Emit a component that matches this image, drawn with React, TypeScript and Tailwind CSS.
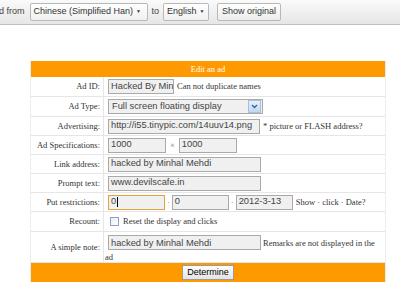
import React from "react";

const serif = { fontFamily: '"Liberation Serif", "Times New Roman", serif' };
const sans = { fontFamily: '"Liberation Sans", Arial, sans-serif' };

function Field({ w, value, focus }: { w: string; value: string; focus?: boolean }) {
  return (
    <span
      className={`inline-flex items-center shrink-0 h-[15px] ${w} px-[2px] align-middle overflow-hidden whitespace-nowrap text-[9.3px] text-[#444] bg-[#f0f0f0] border ${
        focus ? "border-[#e5a33c]" : "border-[#a9a9a9]"
      }`}
      style={sans}
    >
      {value}
      {focus && <span className="inline-block w-px h-[10px] bg-black ml-px" />}
    </span>
  );
}

function Row({ label, h, children }: { label: string; h: string; children: React.ReactNode }) {
  return (
    <div className={`flex ${h} border-b border-[#e6e6e6]`}>
      <div className="w-[73px] shrink-0 flex items-center justify-end pr-[3px] border-r border-[#e6e6e6] text-[8.5px] text-[#333] whitespace-nowrap" style={serif}>
        {label}
      </div>
      <div className="flex-1 flex items-center pl-[4px] text-[8.5px] text-[#333] whitespace-nowrap" style={serif}>
        {children}
      </div>
    </div>
  );
}

export default function App() {
  return (
    <div className="w-[400px] h-[294px] bg-white overflow-hidden relative">
      {/* top translate bar */}
      <div className="h-[25px] flex items-center whitespace-nowrap border-b border-[#bdbdbd] bg-gradient-to-b from-[#fafafa] to-[#e6e6e6] text-[9px] text-[#444]" style={sans}>
        <span className="ml-[-1px]">d from</span>
        <span className="ml-[5px] shrink-0 h-[18px] w-[118px] flex items-center px-[3px] border border-[#b8b8b8] rounded-[2px] bg-gradient-to-b from-white to-[#f0f0f0] text-[#333]">
          Chinese (Simplified Han)
          <span className="ml-[3px] text-[5px]">▼</span>
        </span>
        <span className="ml-[4px]">to</span>
        <span className="ml-[4px] shrink-0 h-[18px] w-[46px] flex items-center px-[3px] border border-[#b8b8b8] rounded-[2px] bg-gradient-to-b from-white to-[#f0f0f0] text-[#333]">
          English
          <span className="ml-[3px] text-[5px]">▼</span>
        </span>
        <span className="ml-[8px] shrink-0 h-[18px] w-[64px] flex items-center justify-center border border-[#b8b8b8] rounded-[2px] bg-gradient-to-b from-white to-[#ececec] text-[#333]">
          Show original
        </span>
      </div>

      {/* form table */}
      <div className="ml-[30px] mt-[36px] w-[356px] border-x border-[#ececec]">
        <div className="h-[16px] bg-[#ff9900] flex items-center justify-center text-white text-[8.5px]" style={serif}>
          Edit an ad
        </div>
        <Row label="Ad ID:" h="h-[20px]">
          <Field w="w-[66px]" value="Hacked By Min" />
          <span className="ml-[3px]">Can not duplicate names</span>
        </Row>
        <Row label="Ad Type:" h="h-[20px]">
          <span className="inline-flex items-center h-[15px] w-[155px] border border-[#a9a9a9] bg-[#f0f0f0] text-[9.3px] text-[#444] pl-[3px]" style={sans}>
            <span className="flex-1">Full screen floating display</span>
            <span className="w-[13px] h-[13px] mr-px flex items-center justify-center bg-gradient-to-b from-[#e6f0fb] to-[#c2d8f2] border border-[#a7c0de]">
              <svg width="7" height="5" viewBox="0 0 7 5">
                <path d="M1 1 L3.5 3.5 L6 1" stroke="#3a5f91" strokeWidth="1.3" fill="none" />
              </svg>
            </span>
          </span>
        </Row>
        <Row label="Advertising:" h="h-[19px]">
          <Field w="w-[152px]" value="http://i55.tinypic.com/14uuv14.png" />
          <span className="ml-[3px]">* picture or FLASH address?</span>
        </Row>
        <Row label="Ad Specifications:" h="h-[19px]">
          <Field w="w-[58px]" value="1000" />
          <span className="mx-[4px] text-[#777]">×</span>
          <Field w="w-[58px]" value="1000" />
        </Row>
        <Row label="Link address:" h="h-[19px]">
          <Field w="w-[153px]" value="hacked by Minhal Mehdi" />
        </Row>
        <Row label="Prompt text:" h="h-[19px]">
          <Field w="w-[153px]" value="www.devilscafe.in" />
        </Row>
        <Row label="Put restrictions:" h="h-[19px]">
          <Field w="w-[57px]" value="0" focus />
          <span className="mx-[2px] text-[#777]">·</span>
          <Field w="w-[57px]" value="0" />
          <span className="mx-[2px] text-[#777]">·</span>
          <Field w="w-[57px]" value="2012-3-13" />
          <span className="ml-[3px]">Show · click · Date?</span>
        </Row>
        <Row label="Recount:" h="h-[20px]">
          <span className="ml-[2px] w-[9px] h-[9px] border border-[#8ea2bb] bg-gradient-to-br from-[#e8edf3] to-white" />
          <span className="ml-[4px]">Reset the display and clicks</span>
        </Row>
        <div className="flex h-[31px] border-b border-[#e6e6e6]">
          <div className="w-[73px] shrink-0 flex items-center justify-end pr-[3px] border-r border-[#e6e6e6] text-[8.5px] text-[#333] whitespace-nowrap" style={serif}>
            A simple note:
          </div>
          <div className="flex-1 pl-[1px] pt-[3px] text-[8.5px] text-[#333] leading-[10px]" style={serif}>
            <div className="flex items-center">
              <span className="ml-[3px] flex"><Field w="w-[153px]" value="hacked by Minhal Mehdi" /></span>
              <span className="ml-[2px] whitespace-nowrap">Remarks are not displayed in the</span>
            </div>
            <div className="mt-[2px]">ad</div>
          </div>
        </div>
        <div className="h-[19px] bg-[#ff9900] flex items-center justify-center">
          <span className="h-[15px] px-[4px] flex items-center border border-[#9a9a9a] bg-gradient-to-b from-[#fdfdfd] to-[#e4e4e4] text-[9px] text-black" style={sans}>
            Determine
          </span>
        </div>
      </div>
    </div>
  );
}
